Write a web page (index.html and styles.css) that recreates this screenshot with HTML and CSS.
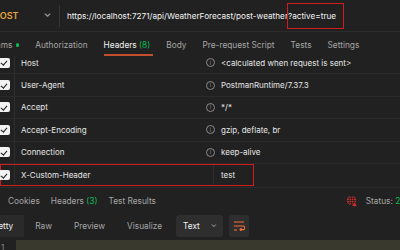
FILE: index.html
```html
<!DOCTYPE html>
<html>
<head>
    <meta charset="UTF-8">
    <title>Headers</title>
    <link rel="stylesheet" href="styles.css">
</head>
<body>
    <div class="app">
        <div class="url-bar">
            <div class="method">POST <span class="chev">&#8964;</span></div>
            <div class="url"><span>https://localhost:7271/api/WeatherForecast/post-weather</span><span class="mark">?active=true</span></div>
        </div>

        <div class="tabs">
            <span class="tab">Params <i class="dot"></i></span>
            <span class="tab">Authorization</span>
            <span class="tab active">Headers <em>(8)</em></span>
            <span class="tab">Body</span>
            <span class="tab">Pre-request Script</span>
            <span class="tab">Tests</span>
            <span class="tab">Settings</span>
        </div>

        <div class="rows">
            <div class="rows-inner">
                <div class="row"><span class="cell-check"><span class="check"></span></span><span class="key">Host</span><span class="info">i</span><span class="val">&lt;calculated when request is sent&gt;</span></div>
                <div class="row"><span class="cell-check"><span class="check"></span></span><span class="key">User-Agent</span><span class="info">i</span><span class="val">PostmanRuntime/7.37.3</span></div>
                <div class="row"><span class="cell-check"><span class="check"></span></span><span class="key">Accept</span><span class="info">i</span><span class="val">*/*</span></div>
                <div class="row"><span class="cell-check"><span class="check"></span></span><span class="key">Accept-Encoding</span><span class="info">i</span><span class="val">gzip, deflate, br</span></div>
                <div class="row"><span class="cell-check"><span class="check"></span></span><span class="key">Connection</span><span class="info">i</span><span class="val">keep-alive</span></div>
                <div class="row custom"><span class="cell-check"><span class="check"></span></span><span class="key">X-Custom-Header</span><span class="val">test</span></div>
            </div>
        </div>

        <div class="resp-tabs">
            <span class="tab">Cookies</span>
            <span class="tab">Headers <em>(3)</em></span>
            <span class="tab">Test Results</span>
            <span class="spacer"></span>
            <svg class="globe" width="12" height="12" viewBox="0 0 12 12"><circle cx="5.5" cy="5.5" r="4.6" fill="#d42d2d"/><path d="M1 5.5h9M5.5 1v9M2 3.3h7M2 7.7h7" stroke="#212121" stroke-width="0.8"/><ellipse cx="5.5" cy="5.5" rx="2.2" ry="4.6" fill="none" stroke="#212121" stroke-width="0.8"/><path d="M8.5 6.5l3 5h-6z" fill="#d42d2d" stroke="#212121" stroke-width="0.8"/></svg>
            <span class="status">Status: <b>200 OK</b></span>
        </div>

        <div class="toolbar">
            <span class="mode selected">Pretty</span>
            <span class="mode">Raw</span>
            <span class="mode">Preview</span>
            <span class="mode">Visualize</span>
            <span class="select">Text <span class="chev">&#8964;</span></span>
            <span class="wrap">
                <svg width="12" height="10" viewBox="0 0 12 10"><path d="M1 1h10M1 5h9a1.8 1.8 0 0 1 0 3.6H7M8.5 7.2L7 8.6l1.5 1.4M1 9h3" fill="none" stroke="#ff6c37" stroke-width="1.1"/></svg>
            </span>
        </div>

        <div class="body-area">
            <span class="ln">1</span>
            <div class="code"></div>
        </div>
    </div>
</body>
</html>
```

FILE: styles.css
```css
body {
    margin: 0;
    padding: 0;
    background-color: #212121;
    font-family: Inter, "Noto Sans", sans-serif;
    font-size: 8px;
    color: #e6e6e6;
    overflow: hidden;
}
.app {
    width: 400px;
    height: 250px;
    overflow: hidden;
    display: flex;
    flex-direction: column;
}

/* barra da url */
.url-bar {
    height: 31px;
    flex: none;
    display: flex;
    align-items: center;
    border-bottom: 1px solid #2b2b2b;
}
.method {
    width: 66px;
    margin-left: -6px;
    color: #eba53e;
    font-size: 9px;
    font-weight: 600;
    display: flex;
    align-items: center;
    gap: 25px;
    box-sizing: border-box;
    height: 22px;
    border-right: 1px solid #343434;
}
.method .chev {
    color: #a0a0a0;
    font-size: 10px;
    margin-top: -6px;
}
.url {
    padding-left: 7px;
    color: #f2f2f2;
    font-size: 8.2px;
    white-space: nowrap;
}
.url .mark {
    outline: 1.5px solid #d21c1c;
    padding: 7px 7px 7px 0;
}

/* abas */
.tabs {
    height: 23px;
    flex: none;
    display: flex;
    align-items: center;
    gap: 16px;
    margin-left: -17px;
    padding-top: 1px;
    color: #a6a6a6;
    font-size: 8.3px;
}
.tab {
    position: relative;
    white-space: nowrap;
}
.tab em {
    font-style: normal;
    color: #0cbb52;
}
.tab.active {
    color: #f2f2f2;
}
.tab.active::after {
    content: "";
    position: absolute;
    left: 0;
    right: -3px;
    bottom: -6px;
    height: 1.5px;
    background: #c2502c;
}
.dot {
    display: inline-block;
    width: 3.5px;
    height: 3.5px;
    border-radius: 50%;
    background: #0cbb52;
    vertical-align: middle;
    margin-left: 1px;
}

/* linhas de headers */
.rows {
    flex: none;
    height: 131px;
    overflow: hidden;
}
.rows-inner {
    margin-top: -4px;
    display: flex;
    flex-direction: column;
}
.row {
    height: 22.4px;
    flex: none;
    display: flex;
    align-items: center;
    border-bottom: 1px solid #2a2a2a;
    box-sizing: border-box;
}
.cell-check {
    width: 15px;
    height: 100%;
    box-sizing: border-box;
    border-right: 1px solid #2e2e2e;
    display: flex;
    align-items: center;
}
.check {
    width: 12px;
    height: 10px;
    margin-left: -2px;
    background: #f2f2f2;
    border-radius: 2px;
    position: relative;
}
.check::after {
    content: "";
    position: absolute;
    left: 4px;
    top: 1.5px;
    width: 2.5px;
    height: 5px;
    border-right: 1.6px solid #1a1a1a;
    border-bottom: 1.6px solid #1a1a1a;
    transform: rotate(40deg);
}
.key {
    width: 185px;
    padding-left: 6px;
}
.info {
    width: 7px;
    height: 7px;
    border: 1px solid #8a8a8a;
    border-radius: 50%;
    font-size: 5.5px;
    color: #8a8a8a;
    display: flex;
    align-items: center;
    justify-content: center;
    margin-right: 6px;
    flex: none;
}
.val {
    color: #e6e6e6;
    white-space: nowrap;
}
.row.custom {
    outline: 1.5px solid #d21c1c;
    outline-offset: -1px;
    width: 254px;
    border-bottom: none;
}
.row.custom .key {
    width: 192px;
}
.row.custom .val {
    padding-left: 7px;
    border-left: 1px solid #2e2e2e;
    height: 100%;
    display: flex;
    align-items: center;
    box-sizing: border-box;
}

/* abas de resposta */
.resp-tabs {
    height: 26px;
    flex: none;
    display: flex;
    align-items: center;
    gap: 11px;
    padding-left: 8px;
    color: #a6a6a6;
    font-size: 8.3px;
    border-top: 1px solid #2a2a2a;
}
.spacer {
    flex: 1;
}
.globe {
    margin-right: -3px;
    flex: none;
}
.status {
    color: #a6a6a6;
    margin-right: -25px;
    white-space: nowrap;
}
.status b {
    font-weight: normal;
    color: #0cbb52;
}

/* barra de formato */
.toolbar {
    height: 22px;
    flex: none;
    display: flex;
    align-items: center;
    margin-left: -21px;
    margin-top: 1px;
    color: #a6a6a6;
    font-size: 8.3px;
}
.mode {
    padding: 0 11px;
    height: 100%;
    display: flex;
    align-items: center;
}
.mode.selected {
    background: #2a2a2a;
    color: #f2f2f2;
}
.select {
    margin-left: 3px;
    background: #2e2e2e;
    color: #f2f2f2;
    padding: 0 6px 0 7px;
    border-radius: 3px;
    width: 47px;
    height: 100%;
    box-sizing: border-box;
    display: flex;
    align-items: center;
    justify-content: space-between;
}
.select .chev {
    color: #a0a0a0;
    margin-top: -5px;
}
.wrap {
    margin-left: 6px;
    background: #2e2e2e;
    border-radius: 3px;
    width: 20px;
    height: 100%;
    display: flex;
    align-items: center;
    justify-content: center;
}

/* corpo */
.body-area {
    flex: 1;
    display: flex;
    margin-top: 3px;
}
.ln {
    width: 16px;
    color: #8a8a8a;
    padding-left: 1px;
    padding-top: 2px;
    box-sizing: border-box;
}
.code {
    flex: 1;
    background: #3a392e;
}
```
